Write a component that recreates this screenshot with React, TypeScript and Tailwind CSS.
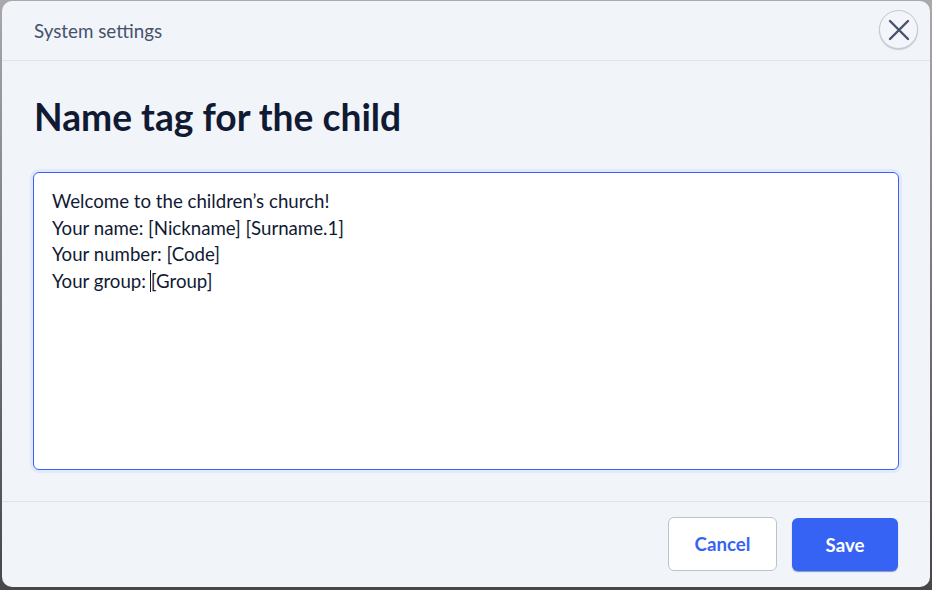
import React from "react";

const lines = [
  "Welcome to the children’s church!",
  "Your name: [Nickname] [Surname.1]",
  "Your number: [Code]",
];

const App: React.FC = () => {
  return (
    <div className="h-[590px] w-[932px] overflow-hidden bg-gradient-to-b from-[#a9a9ab] via-[#77777a] to-[#47474a] pl-[2px] pr-[2px] pt-[1px] font-['Lato',sans-serif]">
      <div className="flex h-[586px] flex-col rounded-[10px] bg-[#f1f4f9]">
        <div className="flex h-[60px] items-start justify-between border-b border-[#e0e4ec] pl-[32px] pr-[12px] pt-[9px]">
          <span className="mt-[8px] text-[18.8px] leading-[26px] text-[#46526a]">System settings</span>
          <button className="flex h-[39px] w-[39px] items-center justify-center rounded-full border border-[#c3c8d4] bg-[#f3f5fa] shadow-[0_1px_1px_rgba(60,70,90,0.25)]">
            <svg width="22" height="22" viewBox="0 0 22 22" fill="none" stroke="#46526a" strokeWidth="2.4" strokeLinecap="round">
              <path d="M2 2 L20 20 M20 2 L2 20" />
            </svg>
          </button>
        </div>
        <div className="flex flex-1 flex-col px-[31px]">
          <h1 className="ml-[1px] mt-[32px] text-[37.2px] font-bold leading-[48px] text-[#111a33]">Name tag for the child</h1>
          <div className="mt-[31px] h-[298px] rounded-[6px] border border-[#3763f4] bg-white px-[18px] py-[15px] text-[18.67px] leading-[26.6px] text-[#111a33] shadow-[0_0_0_3px_#e2e9fa]">
            {lines.map((line) => (
              <div key={line}>{line}</div>
            ))}
            <div>
              Your group: <span className="ml-[-1px] border-l border-[#111a33]">[Group]</span>
            </div>
          </div>
        </div>
        <div className="flex h-[86px] items-start justify-end gap-[15px] border-t border-[#e0e4ec] pr-[32px] pt-[15px]">
          <button className="h-[54px] w-[109px] rounded-[6px] border border-[#bcc1ce] bg-white text-[18.67px] font-bold text-[#3763f4]">
            Cancel
          </button>
          <button className="mt-[1px] h-[53px] w-[106px] rounded-[6px] bg-[#3763f4] text-[18.67px] font-bold text-white shadow-[0_1px_1px_rgba(30,50,130,0.5)]">
            Save
          </button>
        </div>
      </div>
    </div>
  );
};

export default App;
